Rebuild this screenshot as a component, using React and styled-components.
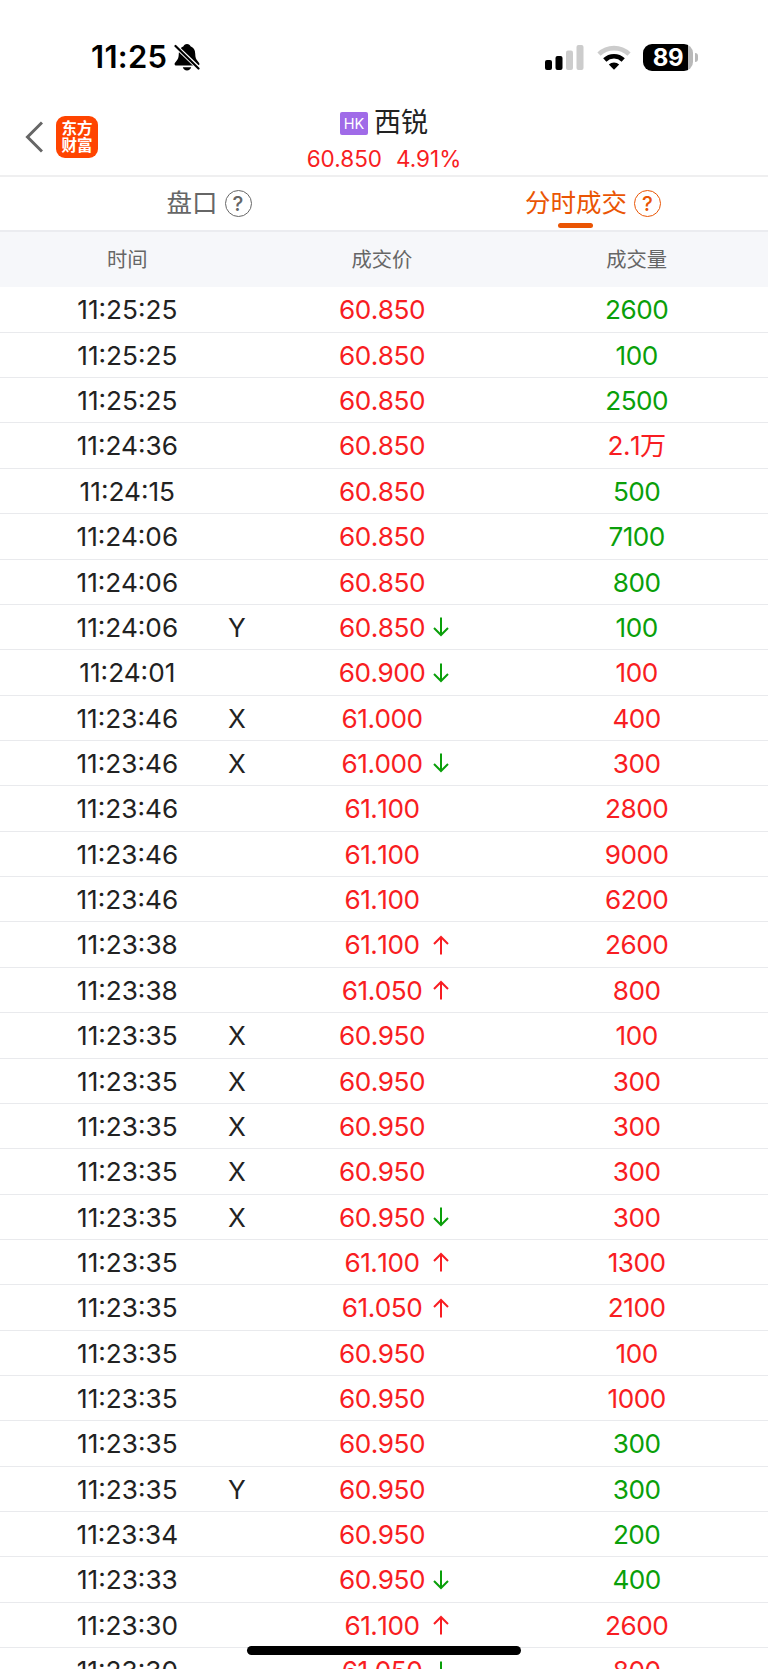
import styled, { createGlobalStyle } from 'styled-components';

const RED = '#f81d22';
const GREEN = '#0a9f0a';
const ORANGE = '#ea5504';
const GREY = '#666';

const GlobalStyle = createGlobalStyle`
* {
    box-sizing: border-box;
}

body {
    margin: 0;
    background: #fff;
    font-family: Inter, "Noto Sans CJK SC", sans-serif;
}
`;

const Screen = styled.div`
position: relative;
display: flex;
flex-direction: column;
width: 768px;
height: 1669px;
overflow: hidden;

& > * {
    flex-shrink: 0;
}
`;

const StatusBar = styled.div`
display: flex;
align-items: center;
justify-content: space-between;
height: 98px;
padding: 16px 70px 0 91px;
`;

const StatusGroup = styled.div`
display: flex;
align-items: center;
gap: ${(p) => p.$gap};
`;

const Clock = styled.span`
font-size: 31px;
font-weight: 600;
line-height: 36px;
letter-spacing: 0.3px;
`;

const Battery = styled.div`
display: flex;
align-items: center;
gap: 2px;

&::after {
    content: '';
    width: 3px;
    height: 9px;
    border-radius: 0 4px 4px 0;
    background: #b9b9b9;
}
`;

const BatteryBody = styled.div`
width: 50px;
height: 27px;
border-radius: 9px;
background: linear-gradient(to right, #000 45px, #b9b9b9 45px);
color: #fff;
font-size: 24px;
font-weight: 700;
line-height: 27px;
letter-spacing: -0.4px;
text-align: center;
`;

const Header = styled.header`
display: grid;
grid-template-columns: 120px 1fr 120px;
height: 79px;
border-bottom: 2px solid #efeff0;
`;

const HeaderLeft = styled.div`
display: flex;
align-items: center;
gap: 13px;
padding: 0 0 1px 25px;
`;

const Logo = styled.div`
display: flex;
flex-direction: column;
align-items: center;
justify-content: center;
width: 42px;
height: 42px;
border-radius: 9px;
background: #ff4400;
color: #fff;
font-size: 15.5px;
font-weight: 700;
line-height: 17px;
`;

const Title = styled.div`
display: flex;
flex-direction: column;
align-items: center;
padding-top: 7px;
`;

const StockName = styled.div`
display: flex;
align-items: center;
gap: 6px;
height: 36px;
color: #222;
font-size: 27px;
line-height: 36px;
`;

const Market = styled.span`
width: 28px;
height: 23px;
border-radius: 2px;
background: #a06be8;
color: #fff;
font-size: 14.5px;
line-height: 24px;
text-align: center;
`;

const Quote = styled.div`
display: flex;
gap: 14px;
color: ${RED};
font-size: 22.5px;
line-height: 35px;
`;

const Tabs = styled.nav`
display: grid;
grid-template-columns: 1fr 1fr;
height: 55px;
border-bottom: 2px solid #ebecf0;
`;

const Tab = styled.div`
display: flex;
justify-content: center;
gap: 7px;
padding-left: 34px;
color: ${(p) => (p.$active ? ORANGE : GREY)};
`;

const TabLabel = styled.div`
display: flex;
flex-direction: column;
align-items: center;
font-size: 25.5px;
line-height: 51px;

&::after {
    content: '';
    width: 35px;
    height: 5px;
    margin-top: -5px;
    border-radius: 3px;
    background: ${(p) => (p.$active ? ORANGE : 'transparent')};
}
`;

const Help = styled.span`
width: 27px;
height: 27px;
margin-top: 13px;
border: 1.4px solid currentColor;
border-radius: 50%;
font-size: 20.5px;
font-weight: 500;
line-height: 25px;
text-align: center;
`;

const TableHead = styled.div`
display: grid;
grid-template-columns: repeat(3, 254.67px);
height: 55.4px;
background: #f6f7fa;
color: ${GREY};
font-size: 20.3px;
line-height: 56px;
text-align: center;
`;

const Row = styled.div`
display: grid;
grid-template-columns: repeat(3, 254.67px);
height: 45.37px;
border-bottom: 1.4px solid #e9eaed;
font-size: 26.2px;
line-height: 45px;
`;

const Cell = styled.div`
display: grid;
grid-template-columns: 1fr ${(p) => p.$mid} 1fr;
color: ${(p) => p.$color};
white-space: nowrap;
`;

const Value = styled.span`
grid-column: 2;
justify-self: center;
`;

const Amount = styled(Value)`
font-kerning: none;
letter-spacing: -0.5px;
`;

const Mark = styled.span`
justify-self: center;
`;

const Arrow = styled.svg`
align-self: center;
margin-left: 6px;
color: ${(p) => p.color};
`;

const HomeIndicator = styled.div`
position: absolute;
bottom: 14px;
left: 247px;
width: 274px;
height: 9px;
border-radius: 5px;
background: #000;
`;

// [time, mark, price, direction, volume, volume colour]
const trades = [
  ['11:25:25', '', '60.850', '', '2600', GREEN],
  ['11:25:25', '', '60.850', '', '100', GREEN],
  ['11:25:25', '', '60.850', '', '2500', GREEN],
  ['11:24:36', '', '60.850', '', '2.1万', RED],
  ['11:24:15', '', '60.850', '', '500', GREEN],
  ['11:24:06', '', '60.850', '', '7100', GREEN],
  ['11:24:06', '', '60.850', '', '800', GREEN],
  ['11:24:06', 'Y', '60.850', 'down', '100', GREEN],
  ['11:24:01', '', '60.900', 'down', '100', RED],
  ['11:23:46', 'X', '61.000', '', '400', RED],
  ['11:23:46', 'X', '61.000', 'down', '300', RED],
  ['11:23:46', '', '61.100', '', '2800', RED],
  ['11:23:46', '', '61.100', '', '9000', RED],
  ['11:23:46', '', '61.100', '', '6200', RED],
  ['11:23:38', '', '61.100', 'up', '2600', RED],
  ['11:23:38', '', '61.050', 'up', '800', RED],
  ['11:23:35', 'X', '60.950', '', '100', RED],
  ['11:23:35', 'X', '60.950', '', '300', RED],
  ['11:23:35', 'X', '60.950', '', '300', RED],
  ['11:23:35', 'X', '60.950', '', '300', RED],
  ['11:23:35', 'X', '60.950', 'down', '300', RED],
  ['11:23:35', '', '61.100', 'up', '1300', RED],
  ['11:23:35', '', '61.050', 'up', '2100', RED],
  ['11:23:35', '', '60.950', '', '100', RED],
  ['11:23:35', '', '60.950', '', '1000', RED],
  ['11:23:35', '', '60.950', '', '300', GREEN],
  ['11:23:35', 'Y', '60.950', '', '300', GREEN],
  ['11:23:34', '', '60.950', '', '200', GREEN],
  ['11:23:33', '', '60.950', 'down', '400', GREEN],
  ['11:23:30', '', '61.100', 'up', '2600', RED],
  ['11:23:30', '', '61.050', 'down', '800', RED],
];

function BellOff() {
  return (
    <svg width="26" height="28" viewBox="0 0 26 28">
      <path d="M13 1c-1.900 0-3.200 1.100-3.500 2.300C6.300 4.500 4.900 7.200 4.800 10.500c-.1 4.200-.8 5.800-2.600 7.700C1 19.500.5 20.300.6 21.200c.1.900.8 1.300 1.700 1.300h21.400c.9 0 1.600-.4 1.700-1.300.1-.9-.4-1.700-1.600-3-1.800-1.900-2.500-3.500-2.600-7.700-.1-3.300-1.500-6-4.700-7.200C16.200 2.100 14.900 1 13 1z" />
      <path d="M8.800 24.300h8.400c-.5 1.900-2.100 3.200-4.200 3.200s-3.700-1.300-4.200-3.200z" />
      <path d="M1 2.500l24.500 23.500" stroke="#fff" strokeWidth="4.400" />
      <path d="M1.500 3l23 22.500" stroke="#000" strokeWidth="2.200" strokeLinecap="round" />
    </svg>
  );
}

function Signal() {
  return (
    <svg width="39" height="25" viewBox="0 0 39 25">
      <rect x="0" y="15" width="7" height="10" rx="2" />
      <rect x="10.500" y="11" width="7" height="14" rx="2" />
      <rect x="21" y="5.500" width="7" height="19.500" rx="2" fill="#ccc" />
      <rect x="31.500" y="0" width="7" height="25" rx="2" fill="#ccc" />
    </svg>
  );
}

function Wifi() {
  return (
    <svg width="34" height="25" viewBox="0 0 34 25" fill="none" strokeWidth="4.600">
      <path d="M2 9.200a21.500 21.500 0 0 1 30 0" stroke="#ccc" />
      <path d="M7.800 15a13.200 13.200 0 0 1 18.400 0" stroke="#000" />
      <path d="M17 24.700l-5.200-5.200a7.500 7.500 0 0 1 10.400 0z" fill="#000" />
    </svg>
  );
}

function Direction({ to }) {
  return (
    <Arrow width="16" height="20" viewBox="0 0 16 20" fill="none" stroke="currentColor" strokeWidth="2" color={to === 'up' ? RED : GREEN}>
      {to === 'up' ? <path d="M8 19.500V2M1 9l7-7 7 7" /> : <path d="M8 .5V18M1 11l7 7 7-7" />}
    </Arrow>
  );
}

export default function App() {
  return (
    <Screen>
      <GlobalStyle />

      <StatusBar>
        <StatusGroup $gap="7px">
          <Clock>11:25</Clock>
          <BellOff />
        </StatusGroup>
        <StatusGroup $gap="12.5px">
          <Signal />
          <Wifi />
          <Battery>
            <BatteryBody>89</BatteryBody>
          </Battery>
        </StatusGroup>
      </StatusBar>

      <Header>
        <HeaderLeft>
          <svg width="18" height="32" viewBox="0 0 18 32" fill="none" stroke="#666" strokeWidth="3">
            <path d="M17 1.500L2.500 16 17 30.500" />
          </svg>
          <Logo>
            <span>东方</span>
            <span>财富</span>
          </Logo>
        </HeaderLeft>
        <Title>
          <StockName>
            <Market>HK</Market>
            <span>西锐</span>
          </StockName>
          <Quote>
            <span>60.850</span>
            <span>4.91%</span>
          </Quote>
        </Title>
      </Header>

      <Tabs>
        <Tab>
          <TabLabel>盘口</TabLabel>
          <Help>?</Help>
        </Tab>
        <Tab $active>
          <TabLabel $active>分时成交</TabLabel>
          <Help>?</Help>
        </Tab>
      </Tabs>

      <TableHead>
        <span>时间</span>
        <span>成交价</span>
        <span>成交量</span>
      </TableHead>

      {trades.map(([time, mark, price, dir, volume, color], i) => (
        <Row key={i}>
          <Cell $mid="184px" $color="#222">
            <Value>{time}</Value>
            <Mark>{mark}</Mark>
          </Cell>
          <Cell $mid="90px" $color={RED}>
            <Amount>{price}</Amount>
            {dir && <Direction to={dir} />}
          </Cell>
          <Cell $mid="90px" $color={color}>
            <Amount>{volume}</Amount>
          </Cell>
        </Row>
      ))}

      <HomeIndicator />
    </Screen>
  );
}
